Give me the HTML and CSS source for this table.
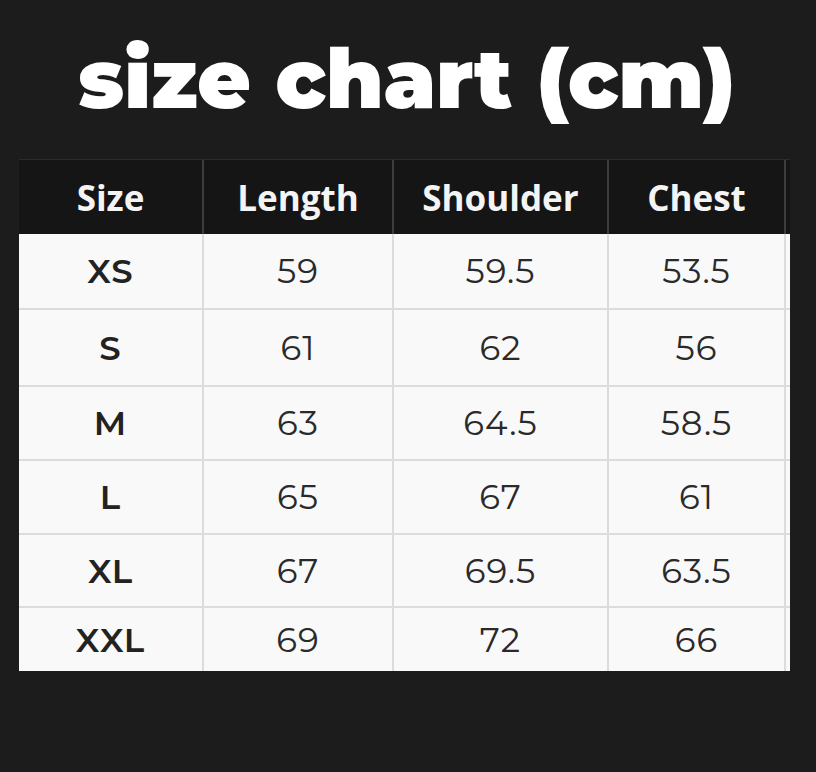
FILE: index.html
```html
<!DOCTYPE html>
<html>
<head>
<meta charset="utf-8">
<link rel="stylesheet" href="styles.css">
</head>
<body>
<div class="page">
  <h1 class="title">size chart (cm)</h1>
  <div class="chart">
    <div class="row head r0">
      <div class="cell">Size</div><div class="cell">Length</div><div class="cell">Shoulder</div><div class="cell">Chest</div>
    </div>
    <div class="row r1"><div class="cell sz">XS</div><div class="cell">59</div><div class="cell">59.5</div><div class="cell">53.5</div></div>
    <div class="row r2"><div class="cell sz">S</div><div class="cell">61</div><div class="cell">62</div><div class="cell">56</div></div>
    <div class="row r3"><div class="cell sz">M</div><div class="cell">63</div><div class="cell">64.5</div><div class="cell">58.5</div></div>
    <div class="row r4"><div class="cell sz">L</div><div class="cell">65</div><div class="cell">67</div><div class="cell">61</div></div>
    <div class="row r5"><div class="cell sz">XL</div><div class="cell">67</div><div class="cell">69.5</div><div class="cell">63.5</div></div>
    <div class="row r6 last"><div class="cell sz">XXL</div><div class="cell">69</div><div class="cell">72</div><div class="cell">66</div></div>
  </div>
</div>
</body>
</html>
```
FILE: styles.css
```css
html, body {
  margin: 0;
  padding: 0;
  background: #1c1c1c;
}
.page {
  width: 816px;
  height: 772px;
  padding: 0 26px 0 19px;
  box-sizing: border-box;
}
.title {
  margin: 0;
  height: 159px;
  box-sizing: border-box;
  padding-top: 34px;
  padding-left: 4px;
  text-align: center;
  color: #fff;
  font-family: Montserrat, Roboto, "Liberation Sans", sans-serif;
  font-weight: 900;
  font-size: 82px;
  line-height: 90px;
  letter-spacing: 0;
}
.chart {
  width: 771px;
}
.row {
  display: grid;
  grid-template-columns: 185px 190px 215px 177px;
  padding-right: 4px;
  background: #f9f9f9;
  border-bottom: 2px solid #dcdcdc;
  box-sizing: border-box;
}
.row.last { border-bottom: none; }
.cell {
  display: flex;
  align-items: center;
  justify-content: center;
  border-right: 2px solid #dcdcdc;
  font-family: Montserrat, "Noto Sans", "Open Sans", sans-serif;
  font-size: 34px;
  letter-spacing: 1px;
  color: #2a2a2a;
  box-sizing: border-box;
}
.cell.sz { font-weight: 600; color: #222; }
.head {
  background: #151515;
  border-bottom: none;
  border-top: 1px solid #2c2c2c;
}
.head .cell {
  color: #f4f4f4;
  border-right: 2px solid #3d3d3d;
  font-family: "Open Sans", "Noto Sans", sans-serif;
  font-weight: 700;
  font-size: 35px;
  letter-spacing: 0;
}
.r0 { height: 75px; }
.r1 { height: 76px; }
.r2 { height: 77px; }
.r3 { height: 74px; }
.r4 { height: 74px; }
.r5 { height: 73px; }
.r6 { height: 63px; }
```
